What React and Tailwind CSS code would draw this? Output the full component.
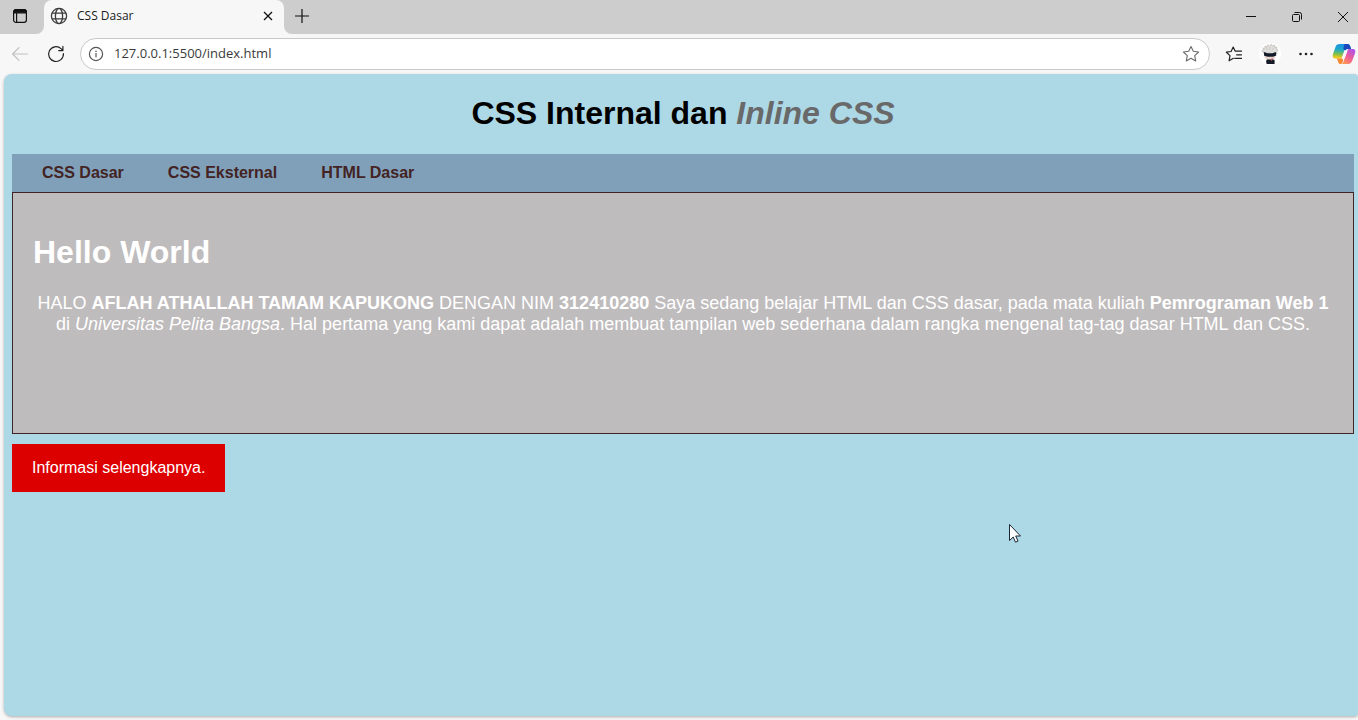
import React from "react";

function TabActionsIcon() {
  return (
    <svg width="16" height="16" viewBox="0 0 16 16" fill="none" stroke="#111" strokeWidth="1.2">
      <rect x="1.6" y="1.6" width="12.8" height="12.8" rx="2.4" />
      <path d="M1.6 4.800V4A2.400 2.400 0 0 1 4 1.600h8A2.400 2.400 0 0 1 14.400 4v.8z" fill="#111" />
      <path d="M4.600 5v9.400" />
    </svg>
  );
}

function GlobeIcon() {
  return (
    <svg width="18" height="18" viewBox="0 0 18 18" fill="none" stroke="#3c3c3c" strokeWidth="1.3">
      <circle cx="9" cy="9" r="7.6" />
      <ellipse cx="9" cy="9" rx="3.6" ry="7.6" />
      <path d="M2 6.2h14M2 11.8h14" />
    </svg>
  );
}

function BackIcon() {
  return (
    <svg width="18" height="18" viewBox="0 0 18 18" fill="none" stroke="#c0c0c0" strokeWidth="1.2" strokeLinecap="round" strokeLinejoin="round">
      <path d="M16.400 9H1.600M8 2.600L1.600 9 8 15.400" />
    </svg>
  );
}

function ReloadIcon() {
  return (
    <svg width="18" height="18" viewBox="0 0 18 18" fill="none" stroke="#222" strokeWidth="1.2" strokeLinecap="round" strokeLinejoin="round">
      <path d="M16.400 8.600A7.400 7.400 0 1 1 14 3.600l1.800 1.800M15.900 1.400v4.200h-4.200" />
    </svg>
  );
}

function InfoIcon() {
  return (
    <svg width="16" height="16" viewBox="0 0 16 16" fill="none" stroke="#555" strokeWidth="1.2" strokeLinecap="round">
      <circle cx="8" cy="8" r="6.6" />
      <path d="M8 7.4v3.4" />
      <circle cx="8" cy="5.2" r="0.8" fill="#555" stroke="none" />
    </svg>
  );
}

function StarIcon() {
  return (
    <svg width="18" height="18" viewBox="0 0 18 18" fill="none" stroke="#6a6a6a" strokeWidth="1.1" strokeLinejoin="round">
      <path d="M9 1.5l2.3 4.8 5.3.7-3.9 3.6 1 5.3L9 13.3l-4.7 2.6 1-5.3L1.4 7l5.3-.7z" />
    </svg>
  );
}

function FavoritesIcon() {
  return (
    <svg width="18" height="18" viewBox="0 0 18 18" fill="none" stroke="#222" strokeWidth="1.2" strokeLinejoin="round" strokeLinecap="round">
      <path d="M8.400 13.300l-4.300 2.500.9-5.200L1.400 7.200l4.700-.7L8.200 2l2 4.200h6.300M11.600 9.800h4.900M9.800 13.400h6.700" />
    </svg>
  );
}

function AvatarPicture() {
  return (
    <svg width="22" height="22" viewBox="0 0 22 22">
      <circle cx="11" cy="11" r="11" fill="#fff" />
      <path d="M4.600 10L2.800 7.600l1.600-.4-.6-2.300 2 .5.2-2.500 2 1 .9-2.500 1.500 1.500L12.400 1l1 2 2.200-1 .3 2.200 2.100-.1-.4 2.200 1.500.6-1.200 1.800.3 2z" fill="#e0dfdc" stroke="#aaa8a5" strokeWidth="0.5" />
      <path d="M7 4l1.500 3M11 3.500l-.5 3.500M15 4.500L13 7.500" stroke="#b9b7b3" strokeWidth="0.5" />
      <path d="M5 12h12l-1.200 3.400L13 17H8.600L6 15.200z" fill="#ead5ce" />
      <path d="M4.800 9l3.800 1.200h4.800l3.400-1.100.5 3.400-3.300 1.200H8.800l-3.600-1z" fill="#141c2b" />
      <path d="M7.800 16.500h6.800l1 .8V21H7.600l-.5-3z" fill="#171b27" />
      <path d="M13.300 15l-.9 3" stroke="#c8545a" strokeWidth="0.8" />
    </svg>
  );
}

function CopilotIcon() {
  return (
    <svg width="24" height="22" viewBox="0 0 24 22">
      <defs>
        <linearGradient id="coolRibbon" x1="0.5" y1="0" x2="0.4" y2="1">
          <stop offset="0" stopColor="#1b8fe6" />
          <stop offset="0.4" stopColor="#1fa9c8" />
          <stop offset="0.7" stopColor="#7cc04e" />
          <stop offset="0.95" stopColor="#f0ca18" />
        </linearGradient>
        <linearGradient id="warmRibbon" x1="0.8" y1="0" x2="0.2" y2="1">
          <stop offset="0" stopColor="#a852ee" />
          <stop offset="0.5" stopColor="#ee5c9a" />
          <stop offset="1" stopColor="#ff9b50" />
        </linearGradient>
      </defs>
      <path d="M8 1h7.500c1.600 0 2.300 1 2.800 2.600L19 6h-3c-1.700 0-2.500.8-3 2.400l-1.500 5c-.5 1.500-1.300 2.100-2.800 2.100H3.300C.8 15.500.2 13.500 1 11l2.500-7C4.200 1.800 5.400 1 8 1z" fill="url(#coolRibbon)" />
      <path d="M12.500 1h3c1.600 0 2.300 1 2.800 2.600L19 6h-3c-1.500 0-2.400.6-3 2l-1.700-2.500z" fill="#1b49bd" />
      <path d="M16 21H9c1.500-.2 2-1.100 2.500-2.600L15 8c.6-1.600 1.300-2.100 3-2.100h2.500c2.700 0 3.300 2 2.500 4.400L20.500 17c-1 2.900-2 4-4.500 4z" fill="url(#warmRibbon)" />
      <path d="M4 15.500h5.200c1.300 0 2 .6 1.800 2-.4 2.200-1 3.500-2.300 3.500-1.400 0-2.300-1-2.700-2.600-.5-1.800-.8-2.500-2-2.900z" fill="#f58a32" />
      <path d="M12.400 7.200h3.300l-2.900 8H9.600z" fill="#fbf5fa" />
    </svg>
  );
}

function TitleBar() {
  return (
    <header className="flex h-[34px] bg-[#cdcdcd]">
      <div className="bg-[#f7f7f7]">
        <button aria-label="Tab actions" className="flex h-[34px] w-11 items-center rounded-br-lg bg-[#cdcdcd] pb-0.5 pl-3">
          <TabActionsIcon />
        </button>
      </div>
      <div className="flex bg-[#cdcdcd]">
        <div className="flex w-60 items-center rounded-t-lg bg-[#f7f7f7] pr-2 pb-0.5 pl-1.5">
          <GlobeIcon />
          <span className="ml-[9px] flex-1 font-['Open_Sans',sans-serif] text-xs text-[#1b1b1b]">CSS Dasar</span>
          <button aria-label="Close tab" className="flex h-4 w-4 items-center justify-center">
            <svg width="10" height="10" viewBox="0 0 10 10" stroke="#111" strokeWidth="1.3">
              <path d="M1 1l8 8M9 1L1 9" />
            </svg>
          </button>
        </div>
      </div>
      <div className="bg-[#f7f7f7]">
        <button aria-label="New tab" className="flex h-[34px] w-9 items-center justify-center rounded-bl-lg bg-[#cdcdcd] pb-0.5">
          <svg width="14" height="14" viewBox="0 0 14 14" stroke="#111" strokeWidth="1.2">
            <path d="M7 0v14M0 7h14" />
          </svg>
        </button>
      </div>
      <div className="ml-auto flex">
        <button aria-label="Minimize" className="flex w-[46px] items-center justify-center">
          <svg width="10" height="10" viewBox="0 0 10 10" stroke="#111">
            <path d="M0 4.500h10" />
          </svg>
        </button>
        <button aria-label="Restore" className="flex w-[46px] items-center justify-center">
          <svg width="10" height="10" viewBox="0 0 10 10" fill="none" stroke="#111">
            <rect x="0.500" y="2.500" width="7" height="7" rx="1" />
            <path d="M2.500.5h5a2 2 0 0 1 2 2v5" />
          </svg>
        </button>
        <button aria-label="Close" className="flex w-[38px] items-center justify-center pl-2">
          <svg width="10" height="10" viewBox="0 0 10 10" stroke="#111">
            <path d="M0 0l10 10M10 0L0 10" />
          </svg>
        </button>
      </div>
    </header>
  );
}

function AddressBar() {
  return (
    <div className="flex h-10 items-center bg-[#f7f7f7] pl-[11px]">
      <button aria-label="Back" className="mr-[18px]">
        <BackIcon />
      </button>
      <button aria-label="Reload" className="mr-[15px]">
        <ReloadIcon />
      </button>
      <form className="flex h-8 flex-1 items-center rounded-full border border-[#c9c9c9] bg-white pr-[9px] pl-[7px]">
        <InfoIcon />
        <input
          aria-label="Address"
          defaultValue="127.0.0.1:5500/index.html"
          className="ml-2.5 flex-1 bg-transparent font-['Open_Sans',sans-serif] text-[13px] text-[#3a3a3a] outline-none"
        />
        <button type="button" aria-label="Add to favorites">
          <StarIcon />
        </button>
      </form>
      <div className="flex items-center pl-[15px]">
        <button aria-label="Favorites">
          <FavoritesIcon />
        </button>
        <button aria-label="Profile" className="ml-4">
          <AvatarPicture />
        </button>
        <button aria-label="Settings and more" className="ml-[17px]">
          <svg width="16" height="16" viewBox="0 0 16 16" fill="#222">
            <circle cx="2.500" cy="8" r="1.300" />
            <circle cx="8" cy="8" r="1.300" />
            <circle cx="13.500" cy="8" r="1.300" />
          </svg>
        </button>
        <button aria-label="Copilot" className="mr-0.5 ml-[18px]">
          <CopilotIcon />
        </button>
      </div>
    </div>
  );
}

function Page() {
  return (
    <main className="flex-1 rounded-l-lg rounded-r-sm bg-[#add8e6] pt-[21px] pr-1 pl-2 font-['Liberation_Sans',Arial,sans-serif] shadow-[0_1px_3px_rgba(0,0,0,0.3)]">
      <h1 className="mb-[22px] text-center text-[32px] leading-[37px] font-bold text-black">
        CSS Internal dan <i className="text-[#696969]">Inline CSS</i>
      </h1>
      <nav className="flex gap-11 bg-[#80a0ba] px-[30px] py-2.5 text-base leading-[18px] font-bold text-[#432323]">
        <a href="#dasar">CSS Dasar</a>
        <a href="#eksternal">CSS Eksternal</a>
        <a href="#html">HTML Dasar</a>
      </nav>
      <section className="min-h-[242px] border border-[#432323] bg-[#bfbcbd] px-5 pt-[41px] text-white">
        <h1 className="mb-[22px] text-[32px] leading-[37px] font-bold">Hello World</h1>
        <p className="text-center text-lg leading-[21px]">
          HALO <b>AFLAH ATHALLAH TAMAM KAPUKONG</b> DENGAN NIM <b>312410280</b> Saya sedang belajar HTML dan CSS dasar, pada mata
          kuliah <b>Pemrograman Web 1</b> di <i>Universitas Pelita Bangsa</i>. Hal pertama yang kami dapat adalah membuat tampilan web
          sederhana dalam rangka mengenal tag-tag dasar HTML dan CSS.
        </p>
      </section>
      <a href="#info" className="mt-2.5 inline-block bg-[#dd0000] px-5 py-[15px] text-base leading-[18px] text-white">
        Informasi selengkapnya.
      </a>
    </main>
  );
}

function Pointer() {
  return (
    <svg className="pointer-events-none absolute top-[523px] left-[1008px]" width="14" height="21" viewBox="0 0 14 21">
      <path d="M1.500 1.500v16l3.700-3.500 2.300 5.200 2.500-1.100-2.300-5.100h4.800z" fill="#fff" stroke="#1a2433" strokeWidth="1" />
    </svg>
  );
}

export default function App() {
  return (
    <div className="relative flex min-h-screen flex-col bg-[#f7f7f7]">
      <TitleBar />
      <AddressBar />
      <div className="flex flex-1 pb-1 pl-1">
        <Page />
      </div>
      <Pointer />
    </div>
  );
}
